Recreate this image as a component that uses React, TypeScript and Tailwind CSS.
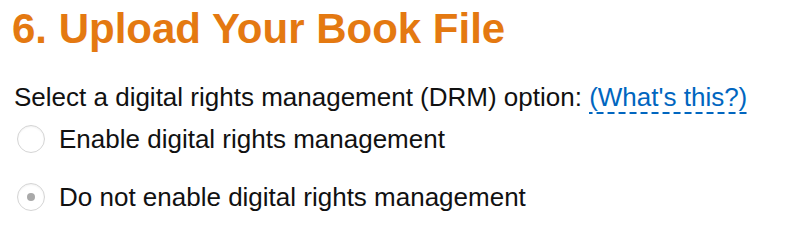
import { useState } from "react"

const options = [
  { id: "enable", label: "Enable digital rights management" },
  { id: "disable", label: "Do not enable digital rights management" },
]

export default function App() {
  const [drm, setDrm] = useState("disable")

  return (
    <div className="w-[786px] h-[248px] bg-white text-[#111] font-['Liberation_Sans',Arial,sans-serif]">
      <h1 className="pt-[5px] pl-[12px] text-[42px] leading-[48px] font-bold text-[#e47911]">
        6. Upload Your Book File
      </h1>

      <div className="mt-[29px] pl-[14px] text-[26px] leading-[30px]">
        <p>
          Select a digital rights management (DRM) option:{" "}
          <span className="text-[#0066c0] pb-[2px] bg-[linear-gradient(to_right,#0066c0_7px,transparent_7px)] bg-[length:11px_2px] bg-repeat-x bg-bottom cursor-pointer">
            (What's this?)
          </span>
        </p>

        <div className="mt-[12px] flex flex-col gap-[28px] pl-[3px]">
          {options.map((o) => {
            const checked = drm === o.id
            return (
              <label
                key={o.id}
                className="flex items-center gap-[14px] h-[30px] cursor-pointer"
                onClick={() => setDrm(o.id)}
              >
                <span className="flex items-center justify-center w-[28px] h-[28px] rounded-full border border-[#d5d5d5] bg-white shadow-[inset_0_1px_2px_rgba(0,0,0,0.06)]">
                  {checked && <span className="w-[8px] h-[8px] rounded-full bg-[#a9a9a9]" />}
                </span>
                <span>{o.label}</span>
              </label>
            )
          })}
        </div>
      </div>
    </div>
  )
}
